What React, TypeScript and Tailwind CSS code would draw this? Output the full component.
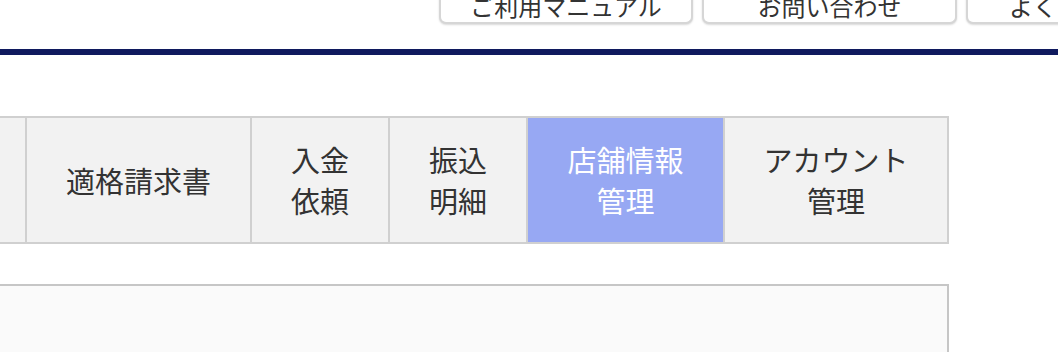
import React from "react";

const font = { fontFamily: '"Noto Sans CJK JP", "Noto Sans", sans-serif' };

function TopButton({ label, w }: { label: string; w: string }) {
  return (
    <div
      className={`${w} h-[38px] shrink-0 bg-white border-2 border-t-0 border-[#d6d6d6] rounded-b-[7px] shadow-[0_1px_2px_rgba(0,0,0,0.15)] flex items-center justify-center text-[24px] leading-none text-[#333] whitespace-nowrap`}
    >
      <span className="mt-[3px]">{label}</span>
    </div>
  );
}

export default function App() {
  return (
    <div className="w-[1058px] h-[352px] overflow-hidden bg-white" style={font}>
      <div className="h-[49px] flex">
        <div className="flex gap-[9px] pl-[439px] -mt-[14px]">
          <TopButton label="ご利用マニュアル" w="w-[254px]" />
          <TopButton label="お問い合わせ" w="w-[255px]" />
          <TopButton label="よくあるご質問" w="w-[254px]" />
        </div>
      </div>
      <div className="h-[6px] bg-[#101a5e]" />
      <div className="mt-[61px] w-[949px] flex border-y-2 border-[#d0d0d0] text-[29px] leading-[41px] text-[#333] text-center">
        <div className="w-[25px] h-[124px] bg-[#f2f2f2] border-r-2 border-[#d0d0d0] box-content" />
        <div className="w-[223px] h-[124px] bg-[#f2f2f2] border-r-2 border-[#d0d0d0] box-content flex items-center justify-center">
          適格請求書
        </div>
        <div className="w-[136px] h-[124px] bg-[#f2f2f2] border-r-2 border-[#d0d0d0] box-content flex items-center justify-center">
          入金<br />依頼
        </div>
        <div className="w-[136px] h-[124px] bg-[#f2f2f2] border-r-2 border-[#d0d0d0] box-content flex items-center justify-center">
          振込<br />明細
        </div>
        <div className="w-[195px] h-[124px] bg-[#97a8f3] text-white border-r-2 border-[#d0d0d0] box-content flex items-center justify-center">
          店舗情報<br />管理
        </div>
        <div className="w-[222px] h-[124px] bg-[#f2f2f2] border-r-2 border-[#d0d0d0] box-content flex items-center justify-center">
          アカウント<br />管理
        </div>
      </div>
      <div className="mt-[40px] w-[949px] h-[80px] bg-[#fafafa] border-t-2 border-r-2 border-[#c6c6c6]" />
    </div>
  );
}
